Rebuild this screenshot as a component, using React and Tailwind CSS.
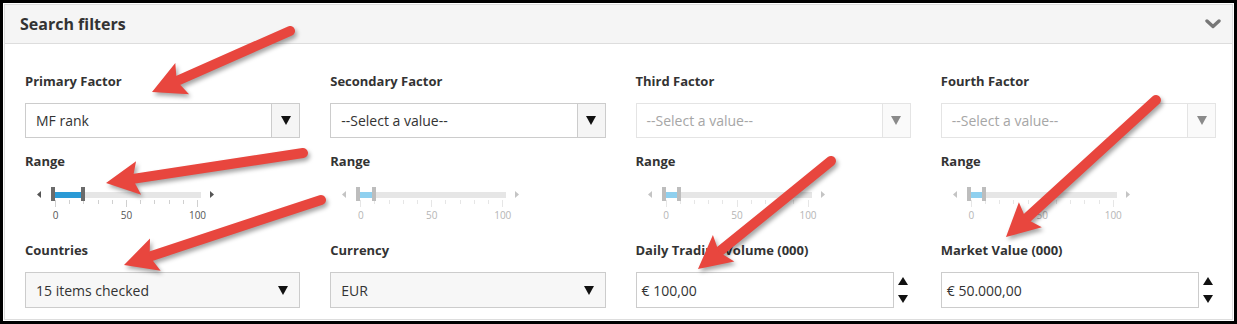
import React from "react";

const font = { fontFamily: '"Open Sans", "Noto Sans", sans-serif' };

function Tri({ dir = "down", color = "#000", w = 10, h = 8 }) {
  const pts =
    dir === "down"
      ? `0,0 ${w},0 ${w / 2},${h}`
      : dir === "up"
      ? `0,${h} ${w},${h} ${w / 2},0`
      : dir === "left"
      ? `${w},0 ${w},${h} 0,${h / 2}`
      : `0,0 0,${h} ${w},${h / 2}`;
  return (
    <svg width={w} height={h} viewBox={`0 0 ${w} ${h}`} className="block">
      <polygon points={pts} fill={color} />
    </svg>
  );
}

function Label({ children }) {
  return (
    <div className="h-[18px] text-[13px] leading-[18px] font-bold text-[#333] whitespace-nowrap">
      {children}
    </div>
  );
}

function ComboSelect({ value, disabled }) {
  return (
    <div
      className={`mt-[13px] flex h-[35px] border bg-white ${
        disabled ? "border-[#e4e4e4]" : "border-[#cccccc]"
      }`}
    >
      <div
        className={`flex flex-1 items-center pl-[10px] text-[14px] ${
          disabled ? "text-[#a6a6a6]" : "text-[#333]"
        }`}
      >
        {value}
      </div>
      <div
        className={`flex w-[28px] items-center justify-center border-l ${
          disabled
            ? "border-[#e4e4e4] bg-[#fafafa]"
            : "border-[#cccccc] bg-[#f5f5f5]"
        }`}
      >
        <Tri dir="down" color={disabled ? "#8a8a8a" : "#111"} w={10} h={9} />
      </div>
    </div>
  );
}

function DropSelect({ value }) {
  return (
    <div className="mt-[13px] flex h-[36px] items-center justify-between border border-[#cccccc] bg-[#f7f7f7] pl-[10px] pr-[11px]">
      <span className="text-[14px] text-[#333]">{value}</span>
      <Tri dir="down" color="#111" w={10} h={9} />
    </div>
  );
}

function NumInput({ value }) {
  return (
    <div className="mt-[13px] flex h-[36px] items-center">
      <div className="flex h-full w-[258px] items-center border border-[#cccccc] bg-white pl-[5px] text-[14px] text-[#333]">
        {value}
      </div>
      <div className="flex h-full flex-1 flex-col items-center justify-between py-[5px] pl-[1px]">
        <Tri dir="up" color="#111" w={10} h={8} />
        <Tri dir="down" color="#111" w={10} h={8} />
      </div>
    </div>
  );
}

function Slider({ hi, disabled }) {
  const px0 = 30;
  const scale = 1.42;
  const hx = px0 + hi * scale;
  const handle = disabled ? "bg-[#bdbdbd]" : "bg-[#6b6b6b]";
  const fill = disabled ? "bg-[#8fd0ef]" : "bg-[#2a9ad6]";
  const arrow = disabled ? "#c4c4c4" : "#555";
  const labelColor = disabled ? "text-[#b5b5b5]" : "text-[#555]";
  const tickColor = disabled ? "bg-[#e6e6e6]" : "bg-[#d0d0d0]";
  const ticks = Array.from({ length: 11 }, (_, i) => i);
  return (
    <div className="relative mt-[17px] h-[42px]">
      <div className="absolute left-[12px] top-[4px]">
        <Tri dir="left" color={arrow} w={4} h={7} />
      </div>
      <div className="absolute left-[185px] top-[4px]">
        <Tri dir="right" color={arrow} w={4} h={7} />
      </div>
      <div className="absolute left-[28px] top-[5px] h-[6px] w-[148px] bg-[#e6e6e6]" />
      {ticks.map((i) => (
        <div
          key={i}
          className={`absolute top-[13px] w-px ${tickColor} ${
            i % 5 === 0 ? "h-[7px]" : "h-[4px]"
          }`}
          style={{ left: px0 + i * 14.2 }}
        />
      ))}
      <div
        className={`absolute top-[5px] h-[6px] ${fill}`}
        style={{ left: 29, width: hx - 29 }}
      />
      <div className={`absolute left-[26px] top-0 h-[14px] w-[4px] ${handle}`} />
      <div
        className={`absolute top-0 h-[14px] w-[4px] ${handle}`}
        style={{ left: hx }}
      />
      {[0, 50, 100].map((v) => (
        <div
          key={v}
          className={`absolute top-[21px] w-[30px] -translate-x-1/2 text-center text-[10px] leading-[14px] ${labelColor}`}
          style={{ left: px0 + v * scale + 0.5 }}
        >
          {v}
        </div>
      ))}
    </div>
  );
}

function Column({ label, value, selectDisabled, sliderDisabled, hi, bottomLabel, bottom }) {
  return (
    <div className="flex flex-col">
      <Label>{label}</Label>
      <ComboSelect value={value} disabled={selectDisabled} />
      <div className="mt-[14px]">
        <Label>Range</Label>
      </div>
      <Slider hi={hi} disabled={sliderDisabled} />
      <div className="mt-[12px]">
        <Label>{bottomLabel}</Label>
      </div>
      {bottom}
    </div>
  );
}

function RedArrows() {
  const arrows = [
    [287, 28, 149, 89],
    [300, 150, 103, 180],
    [318, 197, 121, 262],
    [828, 158, 695, 266],
    [1153, 97, 1003, 234],
  ];
  return (
    <svg
      className="pointer-events-none absolute left-0 top-0 drop-shadow-[2px_3px_2px_rgba(0,0,0,0.35)]"
      width="1237"
      height="324"
      viewBox="0 0 1237 324"
    >
      {arrows.map(([sx, sy, tx, ty], k) => {
        const dx = tx - sx;
        const dy = ty - sy;
        const L = Math.hypot(dx, dy);
        const ux = dx / L;
        const uy = dy / L;
        const px = -uy;
        const py = ux;
        const hl = 33;
        const hw = 17;
        const bx = tx - ux * hl;
        const by = ty - uy * hl;
        const nx = tx - ux * (hl - 6);
        const ny = ty - uy * (hl - 6);
        return (
          <g key={k} fill="#e8463e" stroke="none">
            <line
              x1={sx}
              y1={sy}
              x2={bx + ux * 4}
              y2={by + uy * 4}
              stroke="#e8463e"
              strokeWidth="10"
              strokeLinecap="round"
            />
            <polygon
              points={`${tx},${ty} ${bx + px * hw},${by + py * hw} ${nx},${ny} ${
                bx - px * hw
              },${by - py * hw}`}
            />
          </g>
        );
      })}
    </svg>
  );
}

export default function App() {
  return (
    <div
      className="relative h-[324px] w-[1237px] overflow-hidden border-[3px] border-black bg-white p-px"
      style={font}
    >
      <div className="flex h-full flex-col border border-[#dddddd] bg-white">
        <div className="flex h-[39px] items-center justify-between border-b border-[#dddddd] bg-[#f5f5f5] pl-[15px] pr-[11px]">
          <span className="text-[16px] font-bold text-[#333]">Search filters</span>
          <svg width="16" height="10" viewBox="0 0 16 10">
            <path
              d="M2 2 L8 7.5 L14 2"
              fill="none"
              stroke="#777"
              strokeWidth="3.4"
              strokeLinecap="round"
              strokeLinejoin="round"
            />
          </svg>
        </div>
        <div className="grid grid-cols-4 gap-x-[30px] pl-[20px] pr-[16px] pt-[28px]">
          <Column
            label="Primary Factor"
            value="MF rank"
            hi={18}
            bottomLabel="Countries"
            bottom={<DropSelect value="15 items checked" />}
          />
          <Column
            label="Secondary Factor"
            value="--Select a value--"
            hi={8}
            sliderDisabled
            bottomLabel="Currency"
            bottom={<DropSelect value="EUR" />}
          />
          <Column
            label="Third Factor"
            value="--Select a value--"
            hi={8}
            selectDisabled
            sliderDisabled
            bottomLabel="Daily Trading Volume (000)"
            bottom={<NumInput value="€ 100,00" />}
          />
          <Column
            label="Fourth Factor"
            value="--Select a value--"
            hi={8}
            selectDisabled
            sliderDisabled
            bottomLabel="Market Value (000)"
            bottom={<NumInput value="€ 50.000,00" />}
          />
        </div>
      </div>
      <RedArrows />
    </div>
  );
}
